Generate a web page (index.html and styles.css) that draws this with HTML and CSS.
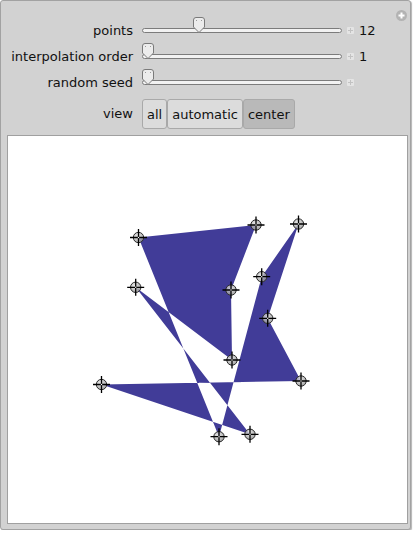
FILE: index.html
```html
<!DOCTYPE html>
<html lang="en">
  <head>
    <meta charset="UTF-8" />
    <title>Manipulate</title>
    <link rel="stylesheet" href="styles.css">
  </head>
  <body>
    <div class="panel">
      <span class="add-btn">
        <svg width="11" height="11" viewBox="0 0 11 11">
          <circle cx="5.5" cy="5.5" r="5.5" fill="#b3b3b3" />
          <path d="M5.5,2.5V8.5M2.5,5.5H8.5" stroke="#fff" stroke-width="2" />
        </svg>
      </span>

      <div class="controls">
        <div class="row">
          <span class="label">points</span>
          <div class="slider">
            <div class="track"></div>
            <svg class="thumb" style="left: 51px" width="12" height="16" viewBox="0 0 12 16">
              <path d="M3,0.5H9Q11.5,0.5 11.5,3V10L6,15.5L0.5,10V3Q0.5,0.5 3,0.5Z" />
              <rect x="3" y="3" width="1" height="1" /><rect x="8" y="3" width="1" height="1" />
            </svg>
          </div>
          <span class="plus"></span>
          <span class="value">12</span>
        </div>
        <div class="row">
          <span class="label">interpolation order</span>
          <div class="slider">
            <div class="track"></div>
            <svg class="thumb" style="left: 0" width="12" height="16" viewBox="0 0 12 16">
              <path d="M3,0.5H9Q11.5,0.5 11.5,3V10L6,15.5L0.5,10V3Q0.5,0.5 3,0.5Z" />
              <rect x="3" y="3" width="1" height="1" /><rect x="8" y="3" width="1" height="1" />
            </svg>
          </div>
          <span class="plus"></span>
          <span class="value">1</span>
        </div>
        <div class="row">
          <span class="label">random seed</span>
          <div class="slider">
            <div class="track"></div>
            <svg class="thumb" style="left: 0" width="12" height="16" viewBox="0 0 12 16">
              <path d="M3,0.5H9Q11.5,0.5 11.5,3V10L6,15.5L0.5,10V3Q0.5,0.5 3,0.5Z" />
              <rect x="3" y="3" width="1" height="1" /><rect x="8" y="3" width="1" height="1" />
            </svg>
          </div>
          <span class="plus"></span>
          <span class="value"></span>
        </div>
        <div class="row view-row">
          <span class="label">view</span>
          <div class="setter">
            <button class="opt">all</button>
            <button class="opt">automatic</button>
            <button class="opt active">center</button>
          </div>
        </div>
      </div>

      <div class="plot">
        <svg width="399" height="387" viewBox="8 136 399 387">
          <defs>
            <radialGradient id="knob" cx="0.4" cy="0.35" r="0.7">
              <stop offset="0" stop-color="#e6e6e6" />
              <stop offset="1" stop-color="#8c8c8c" />
            </radialGradient>
            <g id="loc">
              <circle r="5.2" fill="url(#knob)" fill-opacity="0.8" stroke="#2e2e2e" stroke-width="1" />
              <path d="M-8.5,0H8.5M0,-8.5V8.5" stroke="#000" stroke-width="1.3" />
              <rect x="-0.6" y="-0.6" width="1.2" height="1.2" fill="#fff" />
            </g>
          </defs>
          <polygon class="shape"
            points="138.5,237.5 256,225 231,290 232,360 135.7,287.3 250,434.3 101.5,384.5 301,381 267.7,318.3 298.5,224 261.7,276.7 219,436.7" />
          <use href="#loc" x="138.5" y="237.5" />
          <use href="#loc" x="256" y="225" />
          <use href="#loc" x="231" y="290" />
          <use href="#loc" x="232" y="360" />
          <use href="#loc" x="135.7" y="287.3" />
          <use href="#loc" x="250" y="434.3" />
          <use href="#loc" x="101.5" y="384.5" />
          <use href="#loc" x="301" y="381" />
          <use href="#loc" x="267.7" y="318.3" />
          <use href="#loc" x="298.5" y="224" />
          <use href="#loc" x="261.7" y="276.7" />
          <use href="#loc" x="219" y="436.7" />
        </svg>
      </div>
    </div>
  </body>
</html>
```

FILE: styles.css
```css
* {
  margin: 0;
  padding: 0;
  box-sizing: border-box;
}
body {
  font-family: "DejaVu Sans", Verdana, sans-serif;
  font-size: 13px;
  color: #111;
  background-color: #fff;
}
.panel {
  position: relative;
  width: 411px;
  height: 530px;
  background-color: #d2d2d2;
  border: 1px solid #a2a2a2;
  border-radius: 3px;
  box-shadow: 1px 1px 1px #b4b4b4;
}
.add-btn {
  position: absolute;
  top: 9px;
  right: 3px;
  display: flex;
}
.controls {
  padding-top: 16px;
}
.row {
  display: flex;
  align-items: center;
  height: 26px;
}
.label {
  width: 132px;
  text-align: right;
  margin-right: 9px;
  white-space: nowrap;
}
.slider {
  position: relative;
  display: flex;
  align-items: center;
  width: 200px;
  height: 16px;
}
.track {
  width: 100%;
  height: 5px;
  background-color: #f2f2f2;
  border: 1px solid #7c7c7c;
  border-radius: 3px;
}
.thumb {
  position: absolute;
  top: -5px;
}
.thumb path {
  fill: #ececec;
  stroke: #7a7a7a;
}
.thumb rect {
  fill: #9a9a9a;
}
.plus {
  position: relative;
  width: 7px;
  height: 7px;
  margin-left: 5px;
  background-color: #e4e4e4;
  border-radius: 1px;
}
.plus::before,
.plus::after {
  content: "";
  position: absolute;
  background-color: #c2c2c2;
}
.plus::before {
  left: 1px;
  top: 3px;
  width: 5px;
  height: 1px;
}
.plus::after {
  left: 3px;
  top: 1px;
  width: 1px;
  height: 5px;
}
.value {
  margin-left: 5px;
}
.view-row {
  height: 30px;
  margin-top: 4px;
}
.view-row .label {
  padding-bottom: 2px;
}
.setter {
  display: flex;
  height: 30px;
}
.opt {
  font-family: inherit;
  font-size: 13px;
  color: #111;
  padding: 0 4px;
  background-color: #dcdcdc;
  border: 1px solid #a9a9a9;
  border-radius: 3px;
}
.opt.active {
  background-color: #b9b9b9;
}
.plot {
  margin: 6px 0 0 6px;
  width: 401px;
  height: 389px;
  background-color: #fff;
  border: 1px solid #a0a0a0;
}
.plot svg {
  display: block;
}
.shape {
  fill: #413c98;
  fill-rule: evenodd;
}
```
